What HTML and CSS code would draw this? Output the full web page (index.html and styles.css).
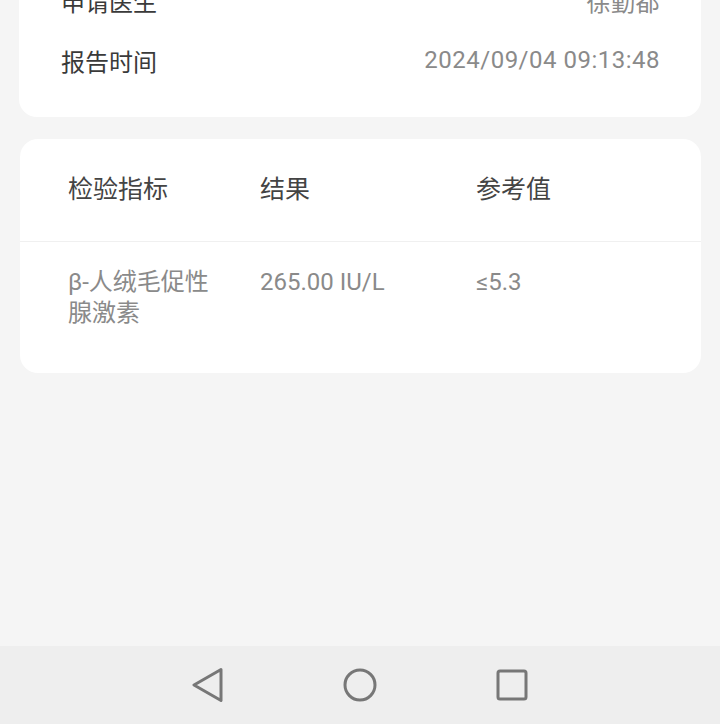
FILE: index.html
```html
<!DOCTYPE html>
<html>
<head>
	<meta charset='utf-8'>
	<title>检验报告</title>
	<link rel="stylesheet" href="styles.css">
</head>
<body>
	<div class="page">
		<div class="content">
			<div class="card info">
				<div class="row">
					<span class="label">申请医生</span>
					<span class="value">徐勤都</span>
				</div>
				<div class="row">
					<span class="label">报告时间</span>
					<span class="value">2024/09/04 09:13:48</span>
				</div>
			</div>
			<div class="card result">
				<div class="grid head">
					<div class="cell">检验指标</div>
					<div class="cell">结果</div>
					<div class="cell">参考值</div>
				</div>
				<div class="grid item">
					<div class="cell">β-人绒毛促性腺激素</div>
					<div class="cell">265.00 IU/L</div>
					<div class="cell">≤5.3</div>
				</div>
			</div>
		</div>
		<div class="navbar">
			<div class="slot">
				<svg width="32" height="34" viewBox="0 0 32 34">
					<path d="M29 1.5 L2 17 L29 32.5 Z" fill="none" stroke="#777" stroke-width="3" stroke-linejoin="round"/>
				</svg>
			</div>
			<div class="slot">
				<svg width="34" height="34" viewBox="0 0 34 34">
					<circle cx="17" cy="17" r="15" fill="none" stroke="#777" stroke-width="3"/>
				</svg>
			</div>
			<div class="slot">
				<svg width="32" height="32" viewBox="0 0 32 32">
					<rect x="2" y="2" width="28" height="28" rx="2" fill="none" stroke="#777" stroke-width="3"/>
				</svg>
			</div>
		</div>
	</div>
</body>
</html>
```

FILE: styles.css
```css
html, body {margin:0; padding:0;}
body {
	background:#f5f5f5;
	font-family: Roboto, "Noto Sans CJK SC", sans-serif;
	overflow:hidden;
}
div.page{
	height:724px;
	display:flex;
	flex-direction:column;
}
div.content{
	flex:1;
	overflow:hidden;
}
div.card{
	background:#fff;
	border-radius:18px;
}
div.info{
	margin:-30px 19px 0 19px;
	padding:0 41px 27px 42px;
}
div.info>div.row{
	height:60px;
	display:flex;
	align-items:center;
	justify-content:space-between;
}
span.label{
	font-size:24px;
	color:#3a3a3a;
}
span.value{
	font-size:24px;
	letter-spacing:0.5px;
	color:#8a8a8a;
}
div.result{
	margin:22px 19px 0 20px;
}
div.grid{
	display:grid;
	grid-template-columns:192px 216px 1fr;
	padding-left:48px;
}
div.grid>div.cell{
	padding-right:30px;
}
div.grid>div.cell:first-child{
	padding-right:40px;
}
div.head{
	height:103px;
	align-items:center;
	font-size:25px;
	color:#444;
	border-bottom:1px solid #f0f0f0;
	padding-bottom:6px;
	box-sizing:border-box;
}
div.item{
	padding-top:25px;
	padding-bottom:44px;
	font-size:24px;
	line-height:31px;
	color:#8a8a8a;
}
div.navbar{
	height:78px;
	background:#eeeeee;
	display:flex;
	align-items:center;
	justify-content:center;
}
div.slot{
	width:152px;
	display:flex;
	justify-content:center;
}
div.slot>svg{
	display:block;
}
```
